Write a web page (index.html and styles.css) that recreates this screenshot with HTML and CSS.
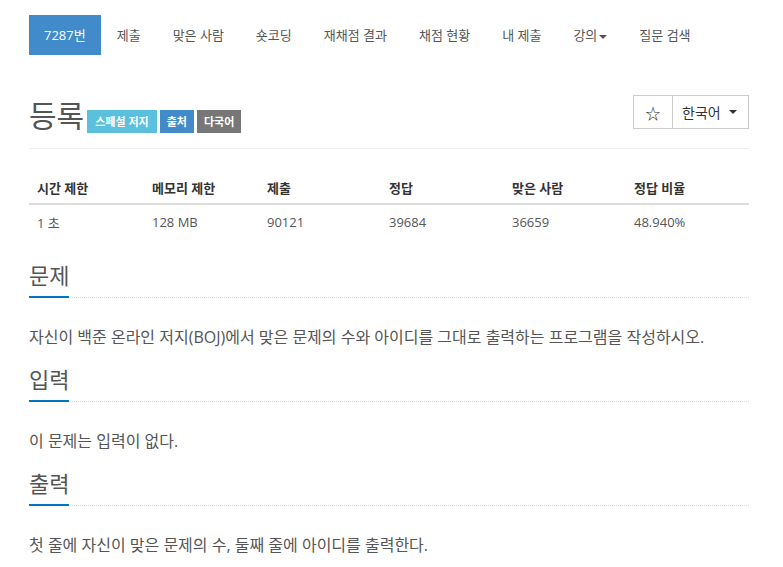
FILE: index.html
```html
<!DOCTYPE html>
<html lang="ko">
<head>
<meta charset="utf-8">
<link rel="stylesheet" href="styles.css">
</head>
<body>
<div class="container">
  <ul class="nav">
    <li class="active"><a>7287번</a></li>
    <li><a>제출</a></li>
    <li><a>맞은 사람</a></li>
    <li><a>숏코딩</a></li>
    <li><a>재채점 결과</a></li>
    <li><a>채점 현황</a></li>
    <li><a>내 제출</a></li>
    <li><a>강의<span class="caret"></span></a></li>
    <li><a>질문 검색</a></li>
  </ul>

  <div class="page-header">
    <h1 class="title">등록
      <span class="label label-info">스페셜 저지</span>
      <span class="label label-primary">출처</span>
      <span class="label label-default">다국어</span>
    </h1>
    <div class="btn-group">
      <span class="btn btn-star">☆</span>
      <span class="btn btn-lang">한국어 <span class="caret dark"></span></span>
    </div>
  </div>

  <table class="info">
    <thead>
      <tr>
        <th class="c1">시간 제한</th>
        <th class="c2">메모리 제한</th>
        <th class="c3">제출</th>
        <th class="c4">정답</th>
        <th class="c5">맞은 사람</th>
        <th class="c6">정답 비율</th>
      </tr>
    </thead>
    <tbody>
      <tr>
        <td>1 초</td>
        <td>128 MB</td>
        <td>90121</td>
        <td>39684</td>
        <td>36659</td>
        <td>48.940%</td>
      </tr>
    </tbody>
  </table>

  <div class="sections">
    <section class="problem-section">
      <div class="headline"><h2>문제</h2></div>
      <p>자신이 백준 온라인 저지(BOJ)에서 맞은 문제의 수와 아이디를 그대로 출력하는 프로그램을 작성하시오.</p>
    </section>
    <section class="problem-section">
      <div class="headline"><h2>입력</h2></div>
      <p>이 문제는 입력이 없다.</p>
    </section>
    <section class="problem-section">
      <div class="headline"><h2>출력</h2></div>
      <p>첫 줄에 자신이 맞은 문제의 수, 둘째 줄에 아이디를 출력한다.</p>
    </section>
  </div>
</div>
</body>
</html>
```

FILE: styles.css
```css
* { box-sizing: border-box; }
html, body { margin: 0; padding: 0; background: #fff; }
body {
  font-family: "Open Sans", "Noto Sans CJK KR", sans-serif;
  color: #555;
  font-size: 13px;
}
.container {
  width: 720px;
  margin-left: 29px;
}
.nav {
  list-style: none;
  margin: 15px 0 0 0;
  padding: 0;
  display: flex;
  height: 40px;
}
.nav li a {
  display: block;
  height: 40px;
  line-height: 40px;
  padding: 0 16px;
  color: #555;
  font-size: 13px;
}
.nav li.active a {
  background: #428bca;
  color: #fff;
  padding: 0 15px;
}
.caret {
  display: inline-block;
  width: 0;
  height: 0;
  margin-left: 2px;
  vertical-align: middle;
  border-top: 4px solid #555;
  border-left: 4px solid transparent;
  border-right: 4px solid transparent;
}
.caret.dark { border-top-color: #333; margin-left: 8px; }

.page-header {
  margin-top: 40px;
  height: 54px;
  border-bottom: 1px solid #eee;
  display: flex;
  justify-content: space-between;
  align-items: flex-start;
}
.title {
  margin: 0;
  font-size: 30px;
  font-weight: 400;
  line-height: 42px;
  color: #555;
  display: flex;
  align-items: center;
}
.label {
  display: inline-block;
  font-size: 11px;
  font-weight: 700;
  color: #fff;
  height: 23px;
  line-height: 23px;
  padding: 0 8px;
  margin-left: 3px;
  position: relative;
  top: 5px;
}
.label-info { background: #5bc0de; margin-left: 3px; }
.label-primary { background: #428bca; padding: 0 7px; }
.label-default { background: #777; padding: 0 7px; }

.btn-group {
  display: flex;
  border: 1px solid #ccc;
  height: 34px;
}
.btn {
  display: flex;
  align-items: center;
  height: 32px;
  font-size: 14px;
  color: #333;
}
.btn-star {
  width: 39px;
  justify-content: center;
  border-right: 1px solid #ccc;
  font-size: 15px;
}
.btn-lang {
  width: 75px;
  padding-left: 9px;
}

.info {
  width: 100%;
  border-collapse: collapse;
  margin-top: 22px;
}
.info th, .info td {
  text-align: left;
  padding: 0 8px;
  font-size: 13px;
}
.info th {
  font-weight: 700;
  color: #333;
  height: 33px;
  border-bottom: 2px solid #ddd;
}
.info td {
  height: 35px;
  color: #555;
}
.c1, .c2 { width: 115px; }
.c3 { width: 122px; }
.c4 { width: 123px; }
.c5 { width: 122px; }
.c6 { width: 123px; }

.sections { padding-top: 5px; }
.headline {
  border-bottom: 1px dotted #ddd;
  margin-top: 15px;
}
.headline h2 {
  display: inline-block;
  margin: 0;
  font-size: 22px;
  font-weight: 400;
  line-height: 32px;
  padding-bottom: 5px;
  border-bottom: 2px solid #0076c0;
  margin-bottom: -1px;
  color: #555;
}
.problem-section p {
  margin: 28px 0 0 0;
  font-size: 16px;
  line-height: 22px;
  color: #555;
}
```
